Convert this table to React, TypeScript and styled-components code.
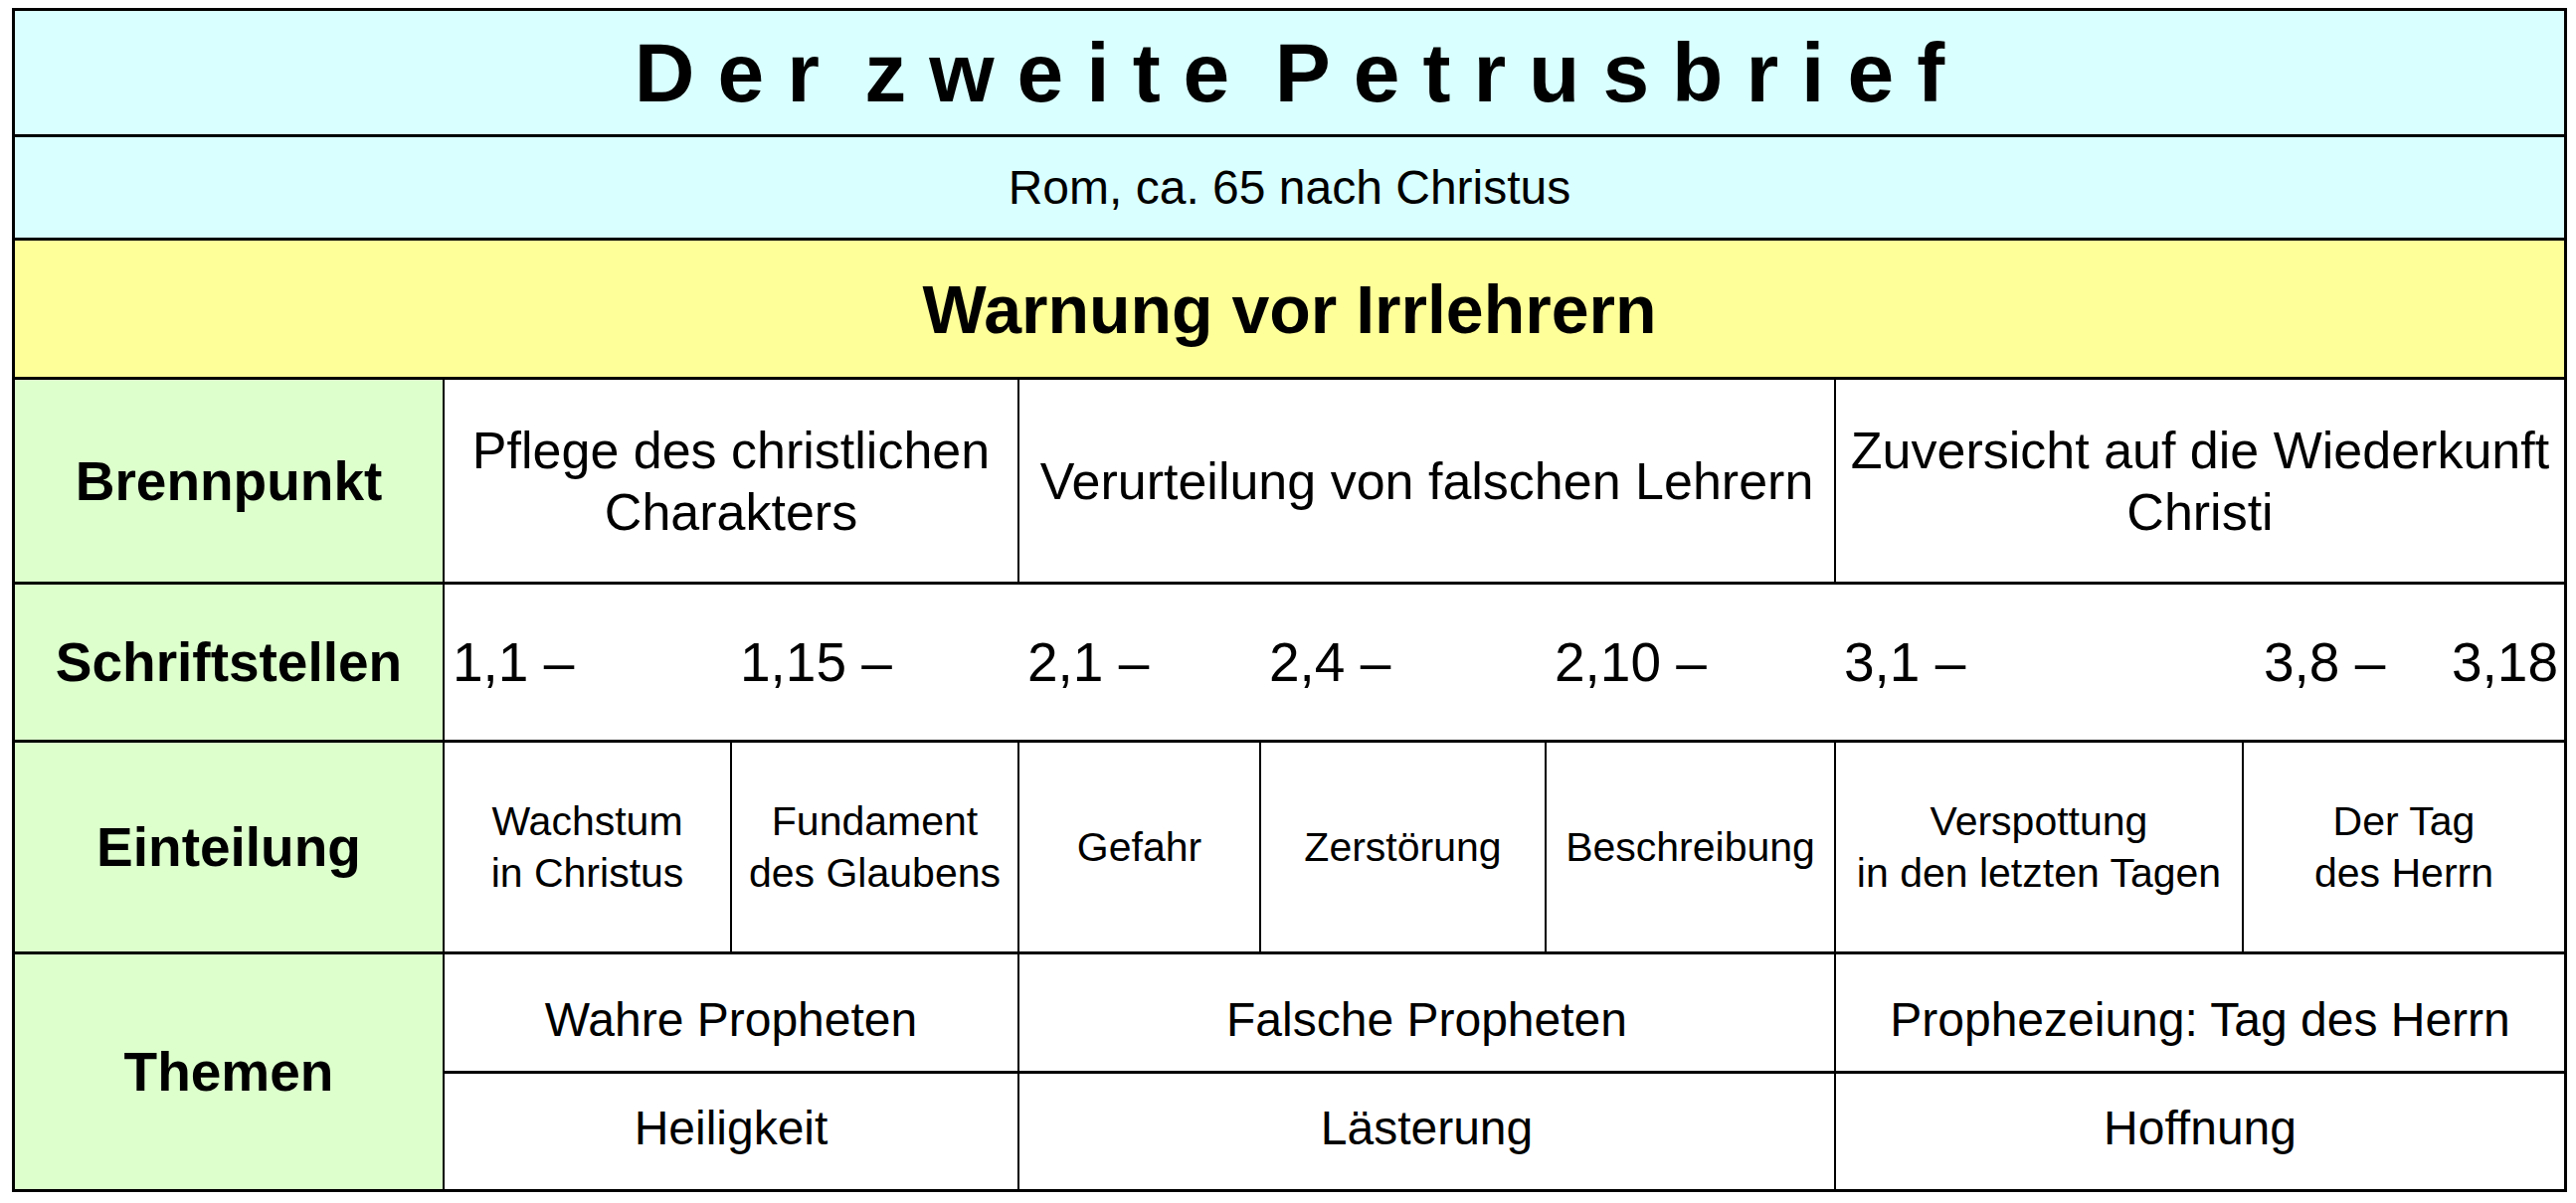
import React from "react";
import styled, { createGlobalStyle } from "styled-components";

const COLS = [430, 287, 287, 241, 285, 289, 408, 322];
const ROWS = [124, 101, 137, 203, 156, 210, 117, 116];
const colTemplate = (cols: number[]) => cols.map((c) => `${c}px`).join(" ");

const GlobalStyle = createGlobalStyle`
  html, body {
    margin: 0;
    padding: 0;
    background: #ffffff;
  }
  body {
    font-family: "Liberation Sans", Arial, Helvetica, sans-serif;
    color: #000;
  }
`;

const Page = styled.div`
  padding: 8px 0 0 12px;
`;

const Chart = styled.div`
  display: inline-grid;
  grid-template-columns: ${colTemplate(COLS)};
  grid-template-rows: ${ROWS.map((r) => `${r}px`).join(" ")};
  column-gap: 2px;
  row-gap: 3px;
  background: #000;
  border: 3px solid #000;
`;

const Cell = styled.div<{ $span?: number; $rows?: number; $bg?: string }>`
  grid-column: span ${(p) => p.$span ?? 1};
  grid-row: span ${(p) => p.$rows ?? 1};
  background: ${(p) => p.$bg ?? "#ffffff"};
  display: flex;
  align-items: center;
  justify-content: center;
  text-align: center;
  white-space: nowrap;
`;

const TitleCell = styled(Cell)`
  background: #d9ffff;
  font-size: 84px;
  font-weight: 700;
  letter-spacing: 23px;
  word-spacing: -24px;
  padding-left: 23px;
`;

const SubtitleCell = styled(Cell)`
  background: #d9ffff;
  font-size: 48px;
`;

const ThemeBanner = styled(Cell)`
  background: #ffff99;
  font-size: 68px;
  font-weight: 700;
`;

const LabelCell = styled(Cell)`
  background: #dcffcc;
  font-size: 55px;
  font-weight: 700;
`;

const FocusCell = styled(Cell)`
  font-size: 52px;
  line-height: 62px;
`;

const RefsCell = styled.div`
  grid-column: span 7;
  background: #fff;
  display: grid;
  grid-template-columns: ${colTemplate(COLS.slice(1))};
  column-gap: 2px;
  align-items: center;
  font-size: 55px;
`;

const RefSlot = styled.div<{ $split?: boolean }>`
  display: flex;
  justify-content: ${(p) => (p.$split ? "space-between" : "flex-start")};
  padding: ${(p) => (p.$split ? "0 6px 0 20px" : "0 0 0 8px")};
  white-space: nowrap;
`;

const DivisionCell = styled(Cell)`
  font-size: 41px;
  line-height: 52px;
`;

const TopicCell = styled(Cell)<{ $shift?: number }>`
  font-size: 48px;
  padding-top: ${(p) => Math.max(0, p.$shift ?? 0)}px;
  padding-bottom: ${(p) => Math.max(0, -(p.$shift ?? 0))}px;
`;

const refs = ["1,1 –", "1,15 –", "2,1 –", "2,4 –", "2,10 –", "3,1 –"];

const divisions: React.ReactNode[] = [
  <>Wachstum<br />in Christus</>,
  <>Fundament<br />des Glaubens</>,
  "Gefahr",
  "Zerstörung",
  "Beschreibung",
  <>Verspottung<br />in den letzten Tagen</>,
  <>Der Tag<br />des Herrn</>,
];

const sections = [
  { span: 2, focus: <>Pflege des christlichen<br />Charakters</>, prophecy: "Wahre Propheten", theme: "Heiligkeit" },
  { span: 3, focus: "Verurteilung von falschen Lehrern", prophecy: "Falsche Propheten", theme: "Lästerung" },
  { span: 2, focus: <>Zuversicht auf die Wiederkunft<br />Christi</>, prophecy: "Prophezeiung: Tag des Herrn", theme: "Hoffnung" },
];

export default function App() {
  return (
    <>
      <GlobalStyle />
      <Page>
        <Chart>
          <TitleCell $span={8}>Der zweite Petrusbrief</TitleCell>
          <SubtitleCell $span={8}>Rom, ca. 65 nach Christus</SubtitleCell>
          <ThemeBanner $span={8}>Warnung vor Irrlehrern</ThemeBanner>

          <LabelCell>Brennpunkt</LabelCell>
          {sections.map((s, i) => (
            <FocusCell key={`f${i}`} $span={s.span}>{s.focus}</FocusCell>
          ))}

          <LabelCell>Schriftstellen</LabelCell>
          <RefsCell>
            {refs.map((r) => (
              <RefSlot key={r}>{r}</RefSlot>
            ))}
            <RefSlot $split>
              <span>3,8 –</span>
              <span>3,18</span>
            </RefSlot>
          </RefsCell>

          <LabelCell>Einteilung</LabelCell>
          {divisions.map((d, i) => (
            <DivisionCell key={`d${i}`}>{d}</DivisionCell>
          ))}

          <LabelCell $rows={2}>Themen</LabelCell>
          {sections.map((s, i) => (
            <TopicCell key={`p${i}`} $span={s.span} $shift={14}>{s.prophecy}</TopicCell>
          ))}
          {sections.map((s, i) => (
            <TopicCell key={`t${i}`} $span={s.span} $shift={-8}>{s.theme}</TopicCell>
          ))}
        </Chart>
      </Page>
    </>
  );
}
